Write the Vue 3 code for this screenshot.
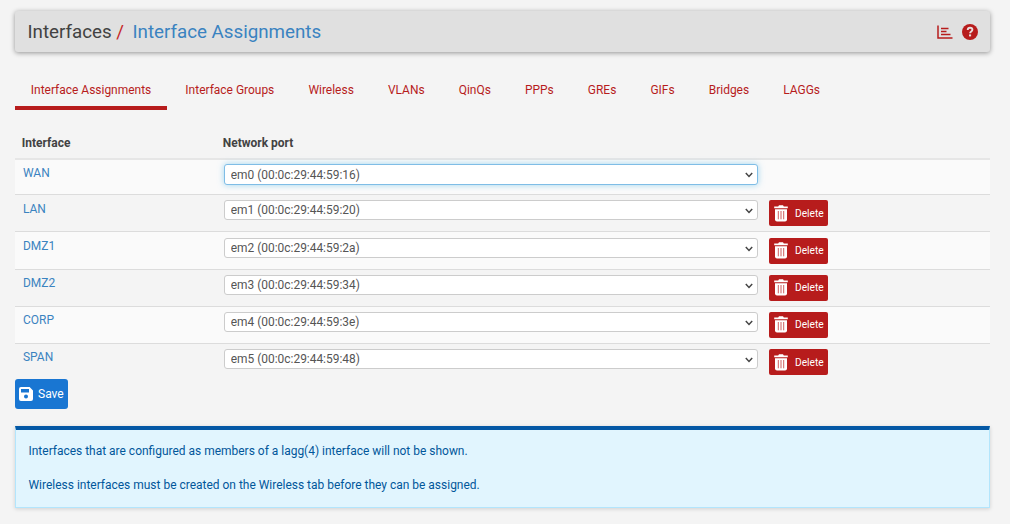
<template>
  <div class="page">
    <header class="page-header">
      <h1 class="breadcrumb">
        <span>Interfaces</span>
        <span class="slash">/</span>
        <a class="current">Interface Assignments</a>
      </h1>
      <div class="header-icons">
        <svg class="icon-chart" viewBox="0 0 16 14">
          <path d="M1 0.5V13H15.5" fill="none" stroke="currentColor" stroke-width="1.5" />
          <path d="M4 3.6H11.5M4 6.6H9.5M4 9.5H13.5" fill="none" stroke="currentColor" stroke-width="1.5" />
        </svg>
        <svg class="icon-help" viewBox="0 0 16 16">
          <circle cx="8" cy="8" r="8" fill="currentColor" />
          <path d="M5.7 6C5.8 4.4 6.8 3.8 8 3.8C9.4 3.8 10.4 4.6 10.4 5.8C10.4 7.5 8.1 7.5 8.1 9.2" fill="none" stroke="#e9dede" stroke-width="1.9" />
          <rect x="7" y="10.4" width="2.1" height="2" fill="#e9dede" />
        </svg>
      </div>
    </header>

    <nav class="tabs">
      <a
        v-for="tab in tabs"
        :key="tab"
        class="tab"
        :class="{ active: tab === activeTab }"
        @click="activeTab = tab"
      >{{ tab }}</a>
    </nav>

    <div class="assignments">
      <div class="row head">
        <span>Interface</span>
        <span>Network port</span>
      </div>
      <div v-for="(item, index) in interfaces" :key="item.name" class="row">
        <a class="name">{{ item.name }}</a>
        <div class="port" :class="{ focused: index === 0 }">
          <select v-model="item.port" class="port-select">
            <option v-for="port in ports" :key="port" :value="port">{{ port }}</option>
          </select>
          <svg class="chevron" viewBox="0 0 8 6">
            <path d="M0.8 1L4 4.4L7.2 1" fill="none" stroke="currentColor" stroke-width="1.5" />
          </svg>
        </div>
        <button v-if="index > 0" class="btn-delete">
          <svg class="icon-trash" viewBox="0 0 14 17">
            <path d="M0.2 1.6H4.2L5 0.3H9L9.8 1.6H13.8V3.2H0.2Z" fill="#fff" />
            <path d="M1 4.3H13V14.4Q13 16.4 11 16.4H3Q1 16.4 1 14.4Z" fill="#fff" />
            <path d="M4.3 6V14.3M7 6V14.3M9.7 6V14.3" stroke="#cf6060" stroke-width="1" />
          </svg>
          <span>Delete</span>
        </button>
      </div>
    </div>

    <button class="btn-save">
      <svg class="icon-save" viewBox="0 0 14 14">
        <path fill-rule="evenodd" d="M2 0H10.6L14 3.4V12Q14 14 12 14H2Q0 14 0 12V2Q0 0 2 0ZM2 2V5.6H10V2ZM7 7.6A2 2 0 1 0 7 11.6A2 2 0 1 0 7 7.6Z" fill="#fff" />
      </svg>
      <span>Save</span>
    </button>

    <div class="info">
      <p>Interfaces that are configured as members of a lagg(4) interface will not be shown.</p>
      <p>Wireless interfaces must be created on the Wireless tab before they can be assigned.</p>
    </div>
  </div>
</template>

<script setup>
import { ref } from 'vue'

const tabs = [
  'Interface Assignments',
  'Interface Groups',
  'Wireless',
  'VLANs',
  'QinQs',
  'PPPs',
  'GREs',
  'GIFs',
  'Bridges',
  'LAGGs'
]
const activeTab = ref('Interface Assignments')

// Available network ports
const ports = [
  'em0 (00:0c:29:44:59:16)',
  'em1 (00:0c:29:44:59:20)',
  'em2 (00:0c:29:44:59:2a)',
  'em3 (00:0c:29:44:59:34)',
  'em4 (00:0c:29:44:59:3e)',
  'em5 (00:0c:29:44:59:48)'
]

const names = ['WAN', 'LAN', 'DMZ1', 'DMZ2', 'CORP', 'SPAN']
const interfaces = ref(names.map((name, i) => ({ name, port: ports[i] })))
</script>

<style>
body {
  background: #f4f4f4;
}
</style>

<style scoped>
.page {
  box-sizing: border-box;
  height: 524px;
  padding: 11px 20px 0 15px;
  overflow: hidden;
  background: #f4f4f4;
  color: #424242;
  font-family: Roboto, sans-serif;
  font-size: 11.97px;
}

.page-header {
  display: flex;
  align-items: center;
  justify-content: space-between;
  height: 41px;
  padding: 0 12.5px;
  border-radius: 3px;
  background: #e0e0e0;
  box-shadow: 0 1px 5px rgba(0, 0, 0, 0.4);
}

.breadcrumb {
  display: flex;
  margin: 0;
  font-size: 18.75px;
  font-weight: 400;
}

.slash {
  margin: 0 8.5px 0 4.5px;
  color: #c62828;
}

.current {
  color: #3a83c0;
}

.header-icons {
  display: flex;
  align-items: center;
  gap: 8.5px;
  color: #b71c1c;
}

.icon-chart {
  width: 16px;
  height: 14px;
}

.icon-help {
  width: 16px;
  height: 16px;
}

.tabs {
  display: flex;
  gap: 2.1px;
  margin-top: 20px;
}

.tab {
  height: 34px;
  padding: 0 16.2px 0 15.8px;
  border-bottom: 4px solid transparent;
  color: #b71c1c;
  line-height: 36px;
  white-space: nowrap;
}

.tab.active {
  border-bottom-color: #b71c1c;
}

.assignments {
  margin-top: 19px;
}

.row {
  display: grid;
  grid-template-columns: 209px 533.5px 1fr;
  align-items: start;
  box-sizing: border-box;
  height: 37.2px;
  border-top: 1px solid #dcdcdc;
}

.row.head {
  height: 29px;
  padding-left: 6.8px;
  border-top: none;
  grid-template-columns: 201px 1fr;
  font-weight: 700;
  line-height: 28px;
}

.row:nth-child(2) {
  height: 36.2px;
  border-top: 2px solid #e6e6e6;
}

.row:nth-child(even) {
  background: #fafafa;
}

.name {
  padding: 5.5px 0 0 8px;
  color: #3a83c0;
  line-height: 16px;
}

.row:nth-child(2) .name {
  padding-top: 5px;
}

.port {
  position: relative;
  box-sizing: border-box;
  height: 20px;
  margin-top: 5.2px;
  border: 1px solid #ccc;
  border-radius: 3px;
  background: #fff;
}

.port.focused {
  margin-top: 4px;
  height: 21px;
  border-color: #7fbde6;
  box-shadow: 0 0 6px rgba(102, 190, 233, 0.6);
}

.port-select {
  display: block;
  width: 100%;
  height: 18px;
  padding: 0 5.8px;
  border: none;
  outline: none;
  appearance: none;
  background: transparent;
  color: #555;
  font-family: inherit;
  font-size: 11.93px;
  line-height: 18px;
}

.focused .port-select {
  height: 19px;
}

.chevron {
  position: absolute;
  top: 7px;
  right: 4px;
  width: 8px;
  height: 6px;
  color: #444;
  pointer-events: none;
}

button {
  display: flex;
  align-items: center;
  box-sizing: border-box;
  border: none;
  color: #fff;
  font-family: inherit;
}

.btn-delete {
  width: 59px;
  height: 26px;
  margin: 5.2px 0 0 11.5px;
  padding: 0 0 0 4.5px;
  gap: 7.5px;
  border-radius: 2px;
  background: #b71c1c;
  font-size: 10.2px;
}

.icon-trash {
  flex: none;
  width: 14px;
  height: 17px;
}

.btn-save {
  width: 53px;
  height: 30px;
  margin-top: -1px;
  padding: 0 0 0 4px;
  gap: 5px;
  border-radius: 3px;
  background: #1976d2;
  font-size: 12px;
}

.icon-save {
  flex: none;
  width: 14px;
  height: 14px;
}

.info {
  box-sizing: border-box;
  height: 82px;
  margin-top: 17px;
  padding: 12.8px 13px 0 12.5px;
  border: 1px solid #b3e5fc;
  border-top: 4px solid #0458a5;
  background: #e1f5fe;
  box-shadow: 0 1px 4px rgba(0, 0, 0, 0.15);
  color: #01579b;
}

.info p {
  margin: 0 0 17px;
  line-height: 17.5px;
}
</style>
